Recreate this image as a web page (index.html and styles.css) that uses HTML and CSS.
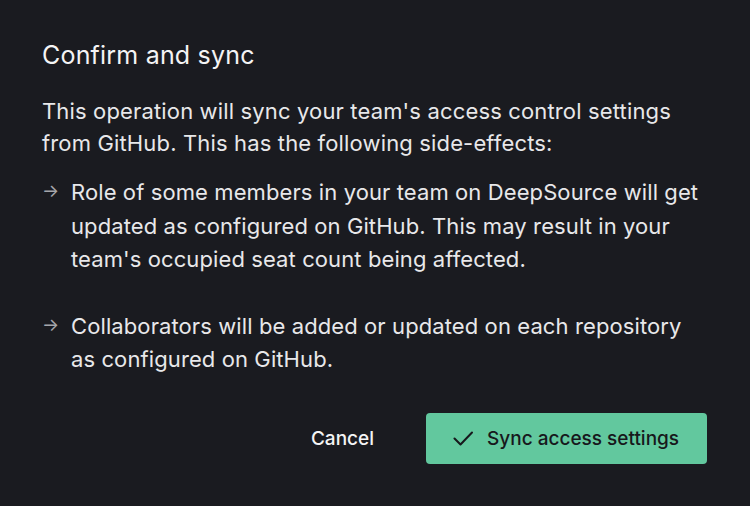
FILE: index.html
```html
<!DOCTYPE html>
<html lang="en">
<head>
<meta charset="utf-8">
<title>Confirm and sync</title>
<link rel="stylesheet" href="styles.css">
</head>
<body>
<div class="modal">
  <h2 class="title">Confirm and sync</h2>
  <p class="intro">This operation will sync your team's access control settings from GitHub. This has the following side-effects:</p>
  <ul class="effects">
    <li class="effect">
      <span class="arrow">&#8594;</span>
      <span class="effect-text">Role of some members in your team on DeepSource will get updated as configured on GitHub. This may result in your team's occupied seat count being affected.</span>
    </li>
    <li class="effect">
      <span class="arrow">&#8594;</span>
      <span class="effect-text">Collaborators will be added or updated on each repository as configured on GitHub.</span>
    </li>
  </ul>
  <div class="actions">
    <button class="btn-cancel" type="button">Cancel</button>
    <button class="btn-primary" type="button">
      <svg class="check" width="20" height="20" viewBox="0 0 20 20" fill="none" stroke="currentColor" stroke-width="2" stroke-linecap="round" stroke-linejoin="round"><path d="M1.5 10.5l6 6L19 4.5"/></svg>
      <span>Sync access settings</span>
    </button>
  </div>
</div>
</body>
</html>
```

FILE: styles.css
```css
html, body {
  margin: 0;
  padding: 0;
  background: #1a1b20;
}
body {
  font-family: Inter, "Noto Sans", "Liberation Sans", sans-serif;
  color: #e8e8ea;
  width: 750px;
  height: 506px;
  overflow: hidden;
}
.modal {
  padding: 39px 43px 0 42px;
}
.title {
  margin: 0;
  font-size: 25px;
  font-weight: 400;
  line-height: 32px;
  letter-spacing: 0.2px;
  color: #f4f4f5;
}
.intro {
  margin: 24px 0 0;
  font-size: 22px;
  line-height: 32px;
  letter-spacing: 0.15px;
}
.effects {
  list-style: none;
  margin: 17px 0 0;
  padding: 0;
  display: flex;
  flex-direction: column;
  gap: 33px;
}
.effect {
  display: flex;
  font-size: 22px;
  line-height: 33.5px;
  letter-spacing: 0.1px;
}
.arrow {
  flex: 0 0 29px;
  color: #a5a6ab;
  font-size: 18px;
  line-height: 30px;
}
.actions {
  display: flex;
  justify-content: flex-end;
  align-items: center;
  gap: 52px;
  margin-top: 36px;
}
.btn-cancel {
  background: none;
  border: 0;
  padding: 0;
  font: inherit;
  font-size: 19px;
  font-weight: 500;
  color: #f4f4f5;
}
.btn-primary {
  display: flex;
  align-items: center;
  gap: 14px;
  height: 51px;
  width: 281px;
  padding: 0 0 0 27px;
  border: 0;
  border-radius: 4px;
  background: #62c89e;
  color: #17181c;
  font: inherit;
  font-size: 19px;
  font-weight: 500;
}
.check {
  width: 20px;
  height: 20px;
}
```
